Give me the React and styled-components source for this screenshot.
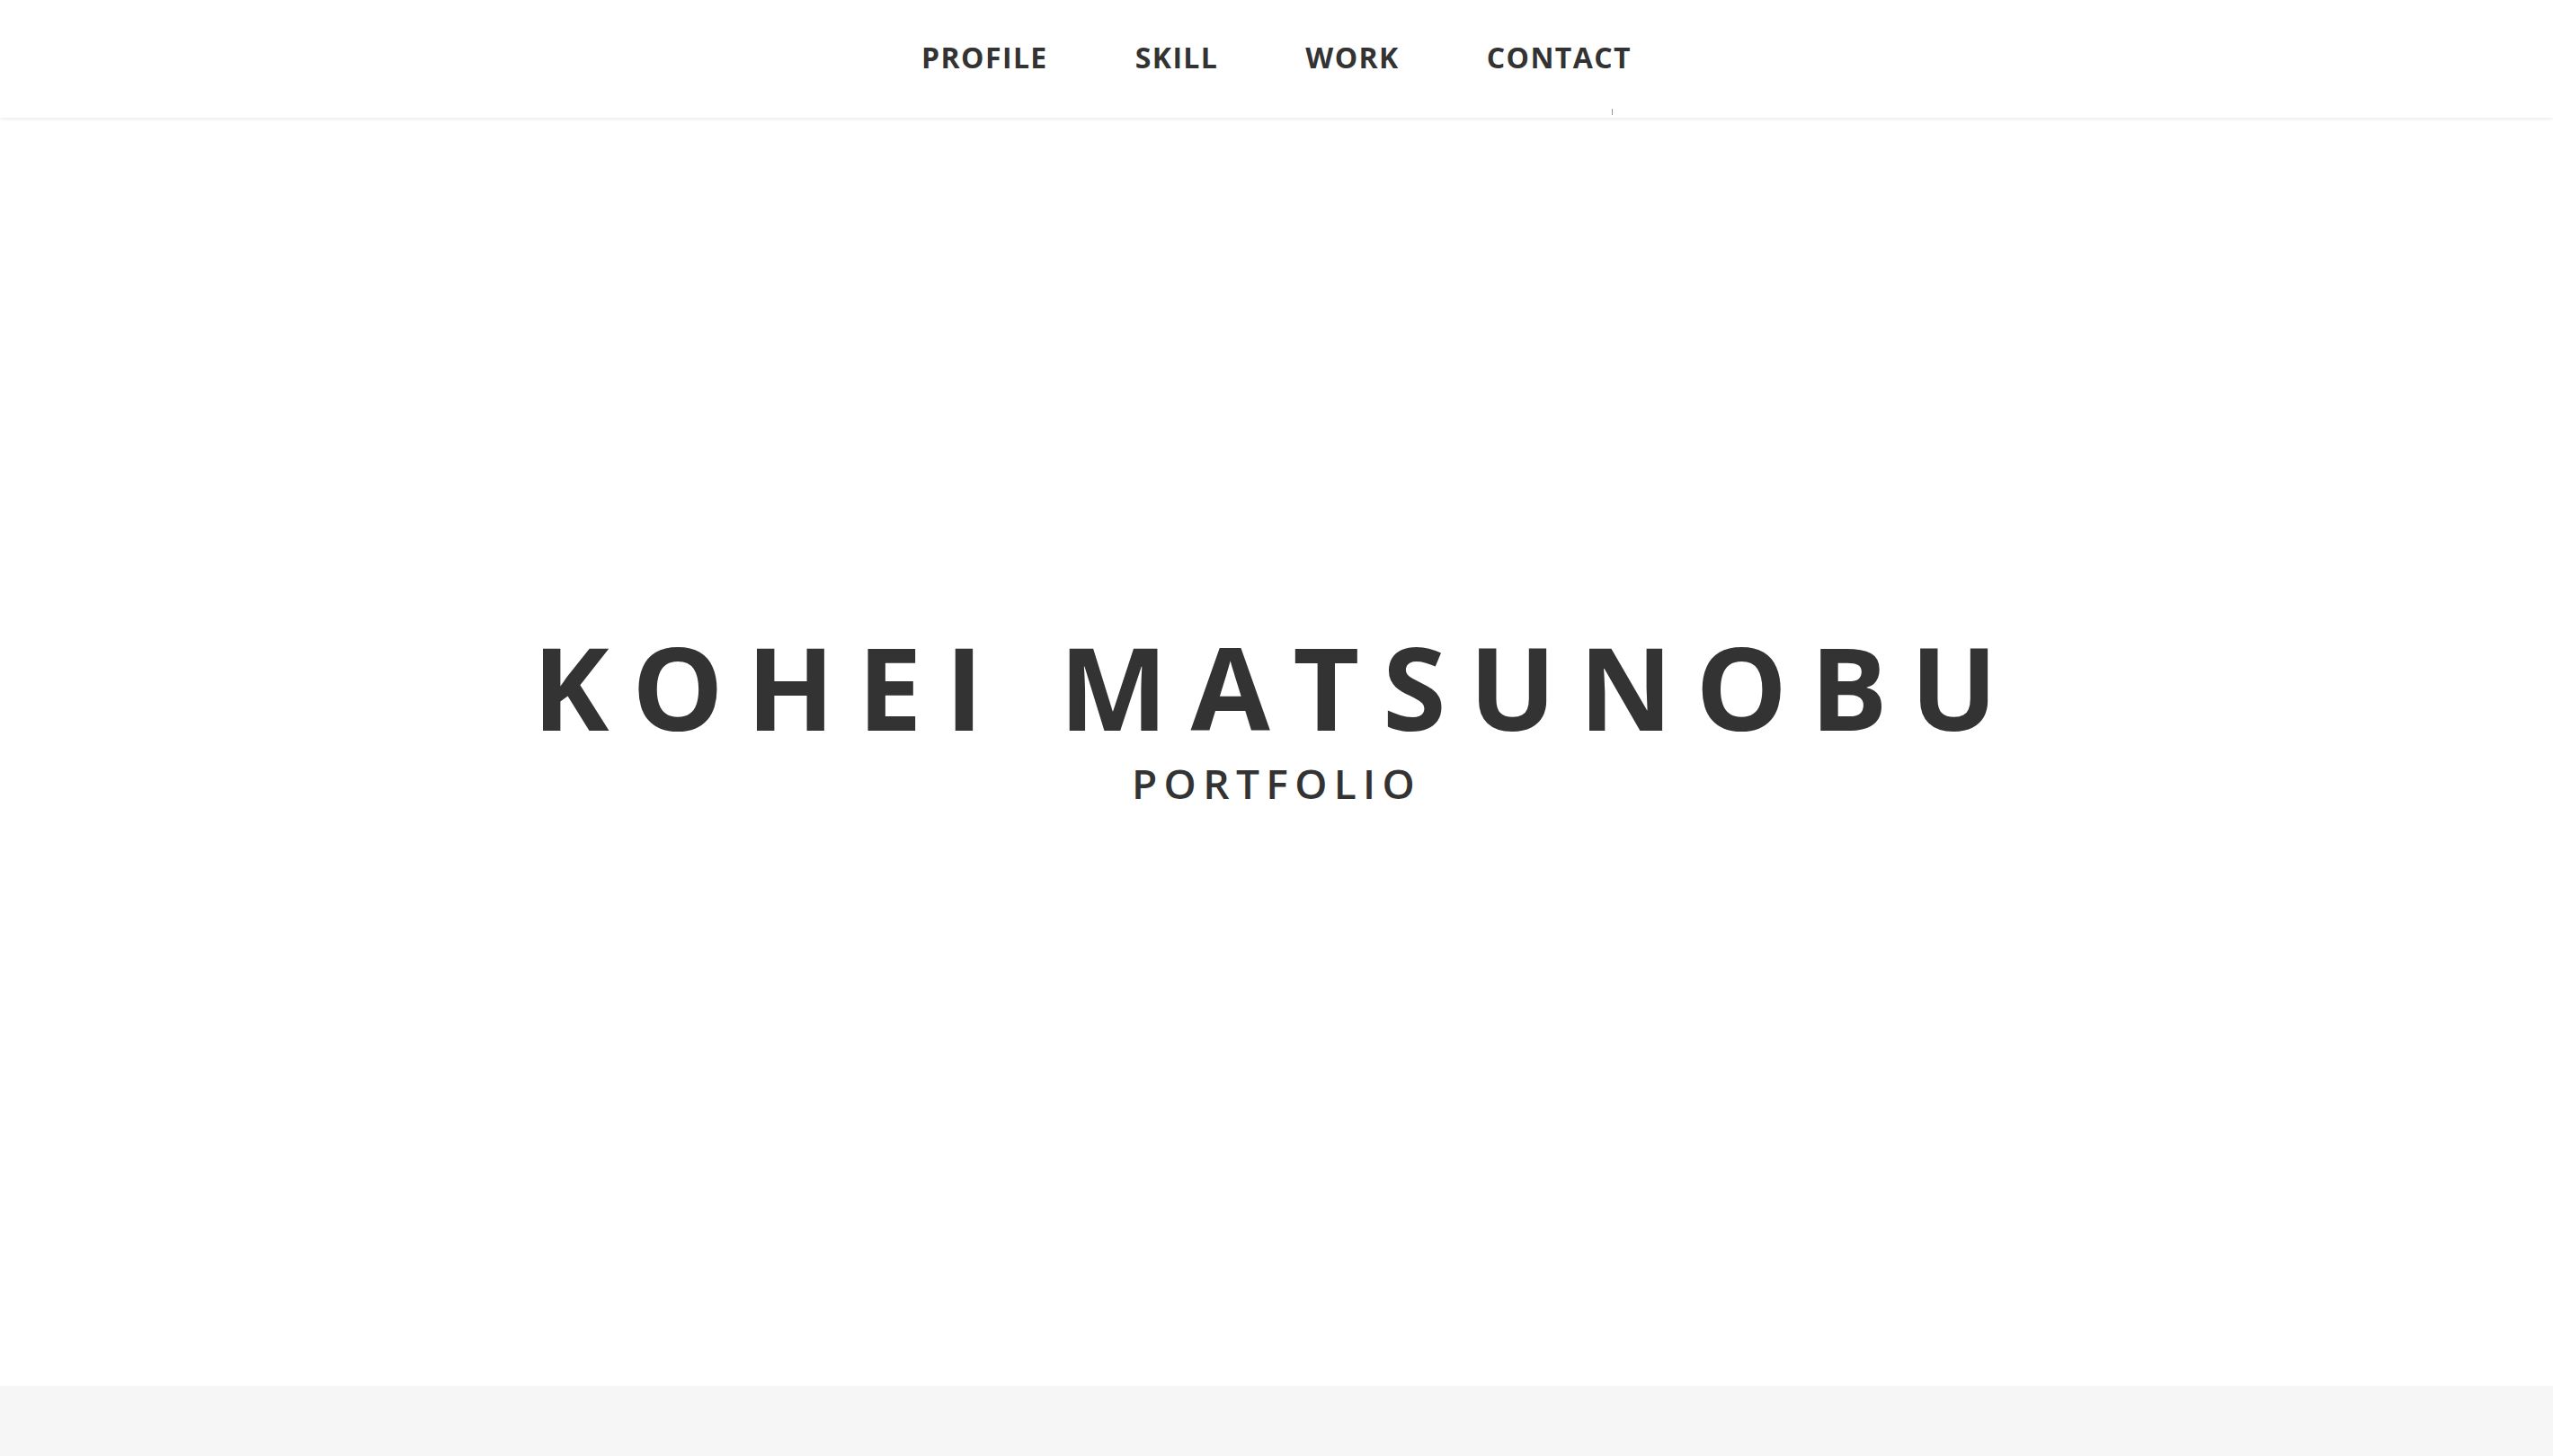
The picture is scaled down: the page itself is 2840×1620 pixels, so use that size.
import React from "react";
import styled, { createGlobalStyle } from "styled-components";

const GlobalStyle = createGlobalStyle`
  html, body {
    margin: 0;
    padding: 0;
    background: #fff;
    font-family: "Open Sans", "Noto Sans", sans-serif;
    color: #333;
  }
  * {
    box-sizing: border-box;
  }
`;

const Header = styled.header`
  position: relative;
  z-index: 2;
  height: 131px;
  display: flex;
  align-items: center;
  justify-content: center;
  padding-bottom: 4px;
  background: #fff;
  box-shadow: 0 1px 4px rgba(0, 0, 0, 0.1);
`;

const Nav = styled.ul`
  display: flex;
  gap: 97px;
  list-style: none;
  margin: 0;
  padding: 0;
`;

const NavItem = styled.li`
  position: relative;
  font-size: 32px;
  font-weight: 700;
  letter-spacing: 1.4px;
  line-height: 1;
  color: #333;
  cursor: pointer;

  ${({ $marker }) =>
    $marker &&
    `
    &::after {
      content: "";
      position: absolute;
      left: 139px;
      top: 73px;
      width: 1px;
      height: 7px;
      background: #999;
    }
  `}
`;

const Hero = styled.section`
  height: 1411px;
  display: flex;
  flex-direction: column;
  align-items: center;
  justify-content: center;
  padding-bottom: 80px;
`;

const Title = styled.h1`
  margin: 0;
  font-size: 128px;
  font-weight: 700;
  line-height: 1;
  letter-spacing: 0.2em;
  color: #333;
`;

const Subtitle = styled.p`
  margin: 20px 0 0;
  font-size: 46px;
  font-weight: 600;
  line-height: 1;
  letter-spacing: 0.16em;
  color: #333;
`;

const Section = styled.section`
  height: 400px;
  background: #f6f6f6;
`;

const links = ["PROFILE", "SKILL", "WORK", "CONTACT"];

const App = () => (
  <>
    <GlobalStyle />
    <Header>
      <Nav>
        {links.map((l) => (
          <NavItem key={l} $marker={l === "CONTACT"}>
            {l}
          </NavItem>
        ))}
      </Nav>
    </Header>
    <Hero>
      <Title>KOHEI MATSUNOBU</Title>
      <Subtitle>PORTFOLIO</Subtitle>
    </Hero>
    <Section />
  </>
);

export default App;
